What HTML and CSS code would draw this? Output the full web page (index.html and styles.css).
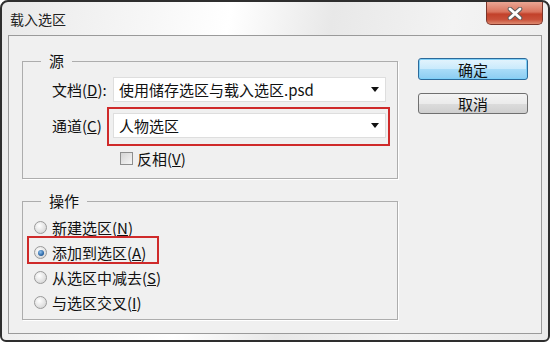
FILE: index.html
```html
<!DOCTYPE html>
<html>
<head>
  <title>载入选区</title>
  <link rel="stylesheet" href="styles.css">
</head>
<body>
  <div class="window">
    <div class="titlebar">
      <span class="title">载入选区</span>
      <div class="close-btn">
        <svg width="18" height="13" viewBox="0 0 18 13">
          <path d="M4 2 L14 11 M14 2 L4 11" stroke="#5a5a5a" stroke-width="4.6" stroke-linecap="round"/>
          <path d="M4 2 L14 11 M14 2 L4 11" stroke="#ffffff" stroke-width="2.8" stroke-linecap="round"/>
        </svg>
      </div>
    </div>

    <div class="panel">
      <div class="groups">
        <fieldset class="group">
          <legend>源</legend>
          <div class="group-body source-body">
            <div class="field-row">
              <span class="field-label">文档(<u>D</u>):</span>
              <div class="select">
                <span>使用储存选区与载入选区.psd</span>
                <span class="arrow"></span>
              </div>
            </div>
            <div class="field-row second">
              <span class="field-label">通道(<u>C</u>)</span>
              <div class="select marked">
                <span>人物选区</span>
                <span class="arrow"></span>
                <span class="red-mark select-mark"></span>
              </div>
            </div>
            <div class="check-row">
              <span class="checkbox"></span>
              <span>反相(<u>V</u>)</span>
            </div>
          </div>
        </fieldset>

        <fieldset class="group ops">
          <legend>操作</legend>
          <div class="group-body ops-body">
            <div class="radio-row">
              <span class="radio"></span>
              <span>新建选区(<u>N</u>)</span>
            </div>
            <div class="radio-row marked">
              <span class="radio checked"></span>
              <span>添加到选区(<u>A</u>)</span>
              <span class="red-mark radio-mark"></span>
            </div>
            <div class="radio-row">
              <span class="radio"></span>
              <span>从选区中减去(<u>S</u>)</span>
            </div>
            <div class="radio-row">
              <span class="radio"></span>
              <span>与选区交叉(<u>I</u>)</span>
            </div>
          </div>
        </fieldset>
      </div>

      <div class="buttons">
        <button class="btn default">确定</button>
        <button class="btn">取消</button>
      </div>
    </div>
  </div>
</body>
</html>
```

FILE: styles.css
```css
body {
  margin: 0;
  background: #ffffff;
  font-family: "Noto Sans CJK SC", "Noto Sans", sans-serif;
  font-size: 15px;
  color: #111;
}

.window {
  width: 550px;
  height: 342px;
  box-sizing: border-box;
  border: 2px solid #2e2e2e;
  border-radius: 8px 8px 6px 6px;
  background: linear-gradient(100deg, #e9e9e9 0%, #f7f7f7 25%, #ffffff 38%, #e8e8e8 55%, #f3f3f3 75%, #eaeaea 100%);
  padding: 0 6px 6px 6px;
  display: flex;
  flex-direction: column;
}

.titlebar {
  height: 33px;
  display: flex;
  justify-content: space-between;
  align-items: flex-start;
}

.title {
  align-self: center;
  margin-left: 2px;
  font-size: 14px;
  color: #222;
}

.close-btn {
  width: 57px;
  height: 23px;
  box-sizing: border-box;
  margin-right: -1px;
  border: 1px solid #7a3429;
  border-top: none;
  border-radius: 0 0 5px 5px;
  background: linear-gradient(#e9a694 0%, #d9735d 45%, #c2412a 55%, #c9513a 80%, #de8a70 100%);
  display: flex;
  align-items: center;
  justify-content: center;
}

.panel {
  flex: 1;
  border: 1px solid #9a9a9a;
  background: #f0f0f0;
  padding: 15px 0 0 13px;
  display: flex;
  align-items: flex-start;
}

.groups {
  width: 376px;
}

.group {
  margin: 0;
  padding: 0;
  border: 1px solid #adadad;
  box-shadow: 1px 1px 0 #ffffff;
  min-width: 0;
}

.group legend {
  margin-left: 18px;
  padding: 0 8px;
  line-height: 20px;
}

.ops {
  margin-top: 12px;
}

.source-body {
  padding: 6px 11px 10px 29px;
}

.field-row {
  display: flex;
  align-items: center;
  height: 25px;
}

.field-row.second {
  margin-top: 11px;
}

.field-label {
  width: 61px;
}

.select {
  position: relative;
  width: 273px;
  height: 25px;
  box-sizing: border-box;
  border: 1px solid #dedede;
  background: #ffffff;
  padding-left: 5px;
  display: flex;
  align-items: center;
  justify-content: space-between;
}

.arrow {
  width: 0;
  height: 0;
  margin-right: 6px;
  border-left: 4px solid transparent;
  border-right: 4px solid transparent;
  border-top: 5px solid #111;
}

.red-mark {
  position: absolute;
  box-sizing: border-box;
  border: 2px solid #cf2a2a;
}

.select-mark {
  top: -7px;
  left: -7px;
  right: -5px;
  bottom: -9px;
}

.check-row {
  margin-top: 10px;
  height: 20px;
  padding-left: 68px;
  display: flex;
  align-items: center;
}

.checkbox {
  width: 13px;
  height: 13px;
  box-sizing: border-box;
  border: 1px solid #8e8f8f;
  background: linear-gradient(135deg, #d4d4d4, #f6f6f6);
  margin-right: 4px;
}

.ops-body {
  padding: 4px 0 4px 11px;
}

.radio-row {
  position: relative;
  height: 25px;
  display: flex;
  align-items: center;
}

.radio {
  width: 13px;
  height: 13px;
  box-sizing: border-box;
  border: 1px solid #9a9a9a;
  border-radius: 50%;
  background: radial-gradient(circle at 40% 35%, #ffffff, #dcdcdc 70%, #c8c8c8);
  margin-right: 5px;
  display: flex;
  align-items: center;
  justify-content: center;
}

.radio.checked::after {
  content: "";
  width: 6px;
  height: 6px;
  border-radius: 50%;
  background: radial-gradient(circle at 40% 35%, #8fc3ef, #1e5a9c 70%);
}

.radio-mark {
  left: -7px;
  top: -4px;
  bottom: 1px;
  width: 132px;
}

.buttons {
  margin: 7px 0 0 20px;
  display: flex;
  flex-direction: column;
}

.btn {
  width: 110px;
  height: 21px;
  padding: 0;
  font-family: inherit;
  font-size: 15px;
  line-height: 19px;
  color: #111;
  border: 1px solid #707070;
  border-radius: 3px;
  background: linear-gradient(#f4f4f4 0%, #ebebeb 50%, #dcdcdc 51%, #cfcfcf 100%);
  margin-top: 13px;
}

.btn.default {
  height: 22px;
  margin-top: 0;
  border-color: #2c6a9a;
  background: linear-gradient(#e4f4fd 0%, #c9eafc 50%, #a9dcf8 51%, #8ccdf2 100%);
  box-shadow: inset 0 0 0 1px #7fd0f8;
}
```
